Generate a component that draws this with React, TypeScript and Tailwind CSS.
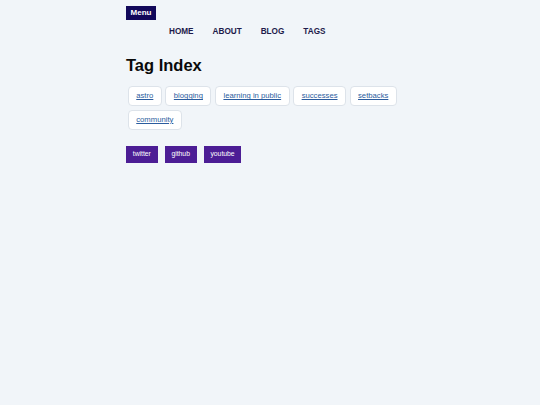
const NAV = ['HOME', 'ABOUT', 'BLOG', 'TAGS'];
const TAGS = ['astro', 'blogging', 'learning in public', 'successes', 'setbacks', 'community'];
const SOCIAL = ['twitter', 'github', 'youtube'];

export default function App() {
  return (
    <div className="min-h-[405px] bg-[#f1f5f9] font-['Liberation_Sans',Arial,sans-serif]">
      <div className="mx-auto w-[288px] pt-[6px]">
        <header className="flex flex-col items-start">
          <button className="block h-[14px] w-[30px] bg-[#12085a] text-[8px] font-bold leading-[14px] text-white">
            Menu
          </button>
          <nav className="mt-[7px] flex gap-[19px] pl-[43px] text-[8.2px] font-bold leading-[10px] text-[#1e1b4b]">
            {NAV.map((n) => (
              <a key={n} href="#">{n}</a>
            ))}
          </nav>
        </header>

        <main>
          <h1 className="mt-[17.5px] text-[16.5px] font-bold leading-[20px] text-[#0a0a0a]">Tag Index</h1>

          <div className="mt-[10px] flex flex-wrap">
            {TAGS.map((t) => (
              <div
                key={t}
                className="m-[1.75px] flex h-[20px] items-center rounded-[4px] border border-[#dde3ea] bg-white px-[7.5px] text-[7.7px] leading-[10px]"
              >
                <a href="#" className="text-[#2b5c9e] underline">{t}</a>
              </div>
            ))}
          </div>

          <div className="mt-[14.5px] flex gap-[7px]">
            {SOCIAL.map((s) => (
              <a
                key={s}
                href="#"
                className="flex h-[16.5px] items-center bg-[#4c1d95] px-[6.75px] text-[6.8px] text-white"
              >
                {s}
              </a>
            ))}
          </div>
        </main>
      </div>
    </div>
  );
}
